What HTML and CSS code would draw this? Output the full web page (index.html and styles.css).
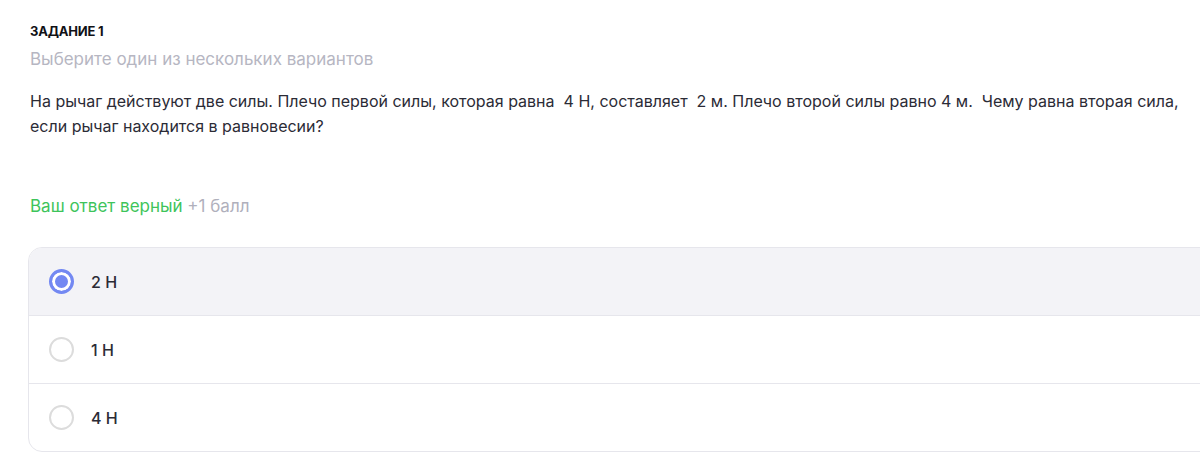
FILE: index.html
```html
<!DOCTYPE html>
<html lang="ru">
<head>
<meta charset="utf-8">
<link rel="stylesheet" href="styles.css">
</head>
<body>
<main class="task">
  <div class="task-label">ЗАДАНИЕ 1</div>
  <div class="task-hint">Выберите один из нескольких вариантов</div>
  <p class="task-question">На рычаг действуют две силы. Плечо первой силы, которая равна&nbsp; 4 Н, составляет&nbsp; 2 м. Плечо второй силы равно 4 м.&nbsp; Чему равна вторая сила, если рычаг находится в равновесии?</p>
  <div class="result"><span class="result-ok">Ваш ответ верный</span> <span class="result-score">+1 балл</span></div>
  <div class="options">
    <div class="option option-selected"><span class="radio radio-checked"></span><span class="option-text">2 Н</span></div>
    <div class="option"><span class="radio"></span><span class="option-text">1 Н</span></div>
    <div class="option"><span class="radio"></span><span class="option-text">4 Н</span></div>
  </div>
</main>
</body>
</html>
```
FILE: styles.css
```css
html, body {
  margin: 0;
  padding: 0;
  background: #ffffff;
}
body {
  font-family: Inter, "Noto Sans", sans-serif;
  color: #2b2b36;
}
.task {
  padding: 22px 0 0 30px;
}
.task-label {
  font-size: 13px;
  font-weight: 700;
  line-height: 18px;
  color: #111116;
  letter-spacing: -0.2px;
}
.task-hint {
  margin-top: 8px;
  font-size: 17px;
  line-height: 22px;
  color: #b6b6c2;
}
.task-question {
  margin: 19px 0 0 0;
  font-size: 16px;
  line-height: 25px;
  color: #2b2b36;
  max-width: 1160px;
}
.result {
  margin-top: 56px;
  font-size: 17px;
  line-height: 22px;
}
.result-ok {
  color: #3ec45b;
}
.result-score {
  color: #b0b0bc;
}
.options {
  margin-top: 30px;
  margin-right: -14px;
  border: 1px solid #e6e6ec;
  border-radius: 14px;
  overflow: hidden;
  margin-left: -2px;
}
.option {
  box-sizing: border-box;
  height: 68px;
  display: flex;
  align-items: center;
  gap: 17px;
  padding-left: 20px;
  border-top: 1px solid #e6e6ec;
}
.option:first-child {
  border-top: none;
  height: 67px;
}
.option-selected {
  background: #f3f3f7;
}
.radio {
  width: 25px;
  height: 25px;
  box-sizing: border-box;
  border-radius: 50%;
  border: 2px solid #dcdcdc;
  background: #ffffff;
  flex: none;
}
.radio-checked {
  border: 3px solid #7388f2;
  box-shadow: inset 0 0 0 3px #ffffff;
  background: #7388f2;
}
.option-text {
  font-size: 16px;
  font-weight: 500;
  color: #2b2b36;
}
```
